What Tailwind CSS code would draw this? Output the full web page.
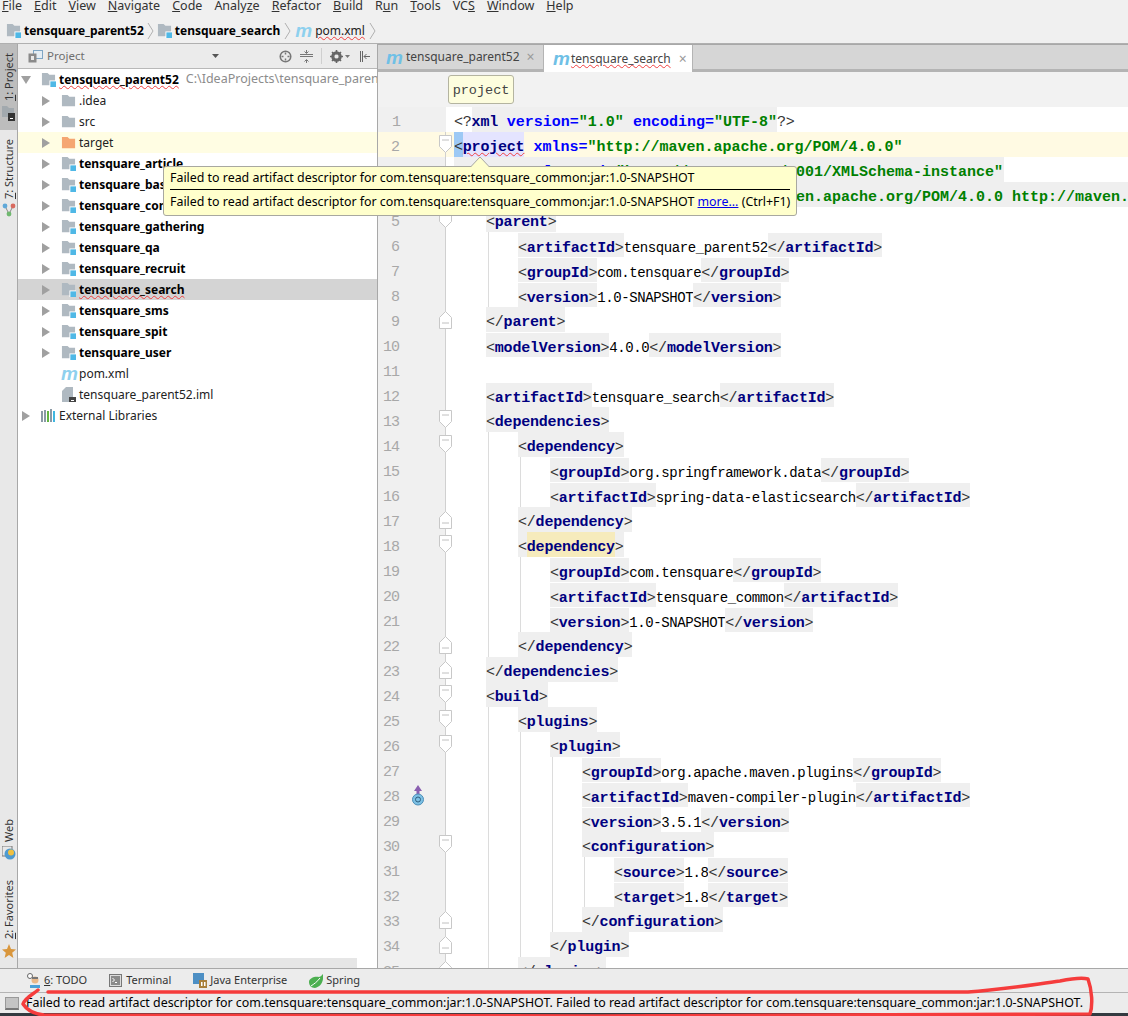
<!DOCTYPE html>
<html lang="en">
<head>
    <meta charset="UTF-8">
    <title>tensquare_parent52 - pom.xml</title>
    <script src="https://cdn.jsdelivr.net/npm/@tailwindcss/browser@4"></script>
</head>
<body class="bg-white">
    <svg class="hidden">
        <symbol id="folder" viewBox="0 0 16 16"><path d="M1 2h6l2 2h6v10H1z" fill="#afb9c1"/></symbol>
        <symbol id="module" viewBox="0 0 16 16"><path d="M1 1h6l2 2h6v11H1z" fill="#afb9c1"/><rect x="9" y="9" width="7" height="7" fill="#fff"/><rect x="10" y="10" width="6" height="6" fill="#4fb8e6"/></symbol>
        <symbol id="arrow" viewBox="0 0 8 10"><path d="M0 0l8 5-8 5z" fill="#a0a0a0"/></symbol>
        <symbol id="fold-down" viewBox="0 0 13 19"><path d="M.5.5h12v11l-6 6-6-6z" fill="#fff" stroke="#c8c8c8"/><path d="M3 5h7" stroke="#c0c0c0"/></symbol>
        <symbol id="fold-up" viewBox="0 0 13 19"><path d="M.5 18.5h12v-11l-6-6-6 6z" fill="#fff" stroke="#c8c8c8"/><path d="M3 13h7" stroke="#c0c0c0"/></symbol>
    </svg>

    <div class="relative w-[1128px] h-[1016px] overflow-hidden flex flex-col font-['Noto_Sans','Open_Sans',sans-serif] text-[12.4px] text-[#222]">
        <!-- Menu bar, cut off at the top of the shot -->
        <div class="h-[15px] shrink-0 bg-[#f0f0f0] flex items-end overflow-hidden pl-[2px] text-[12.5px] leading-[18px] text-[#333]">
            <div class="flex gap-[12px]">
                <span><u>F</u>ile</span><span><u>E</u>dit</span><span><u>V</u>iew</span><span><u>N</u>avigate</span><span><u>C</u>ode</span><span>Analy<u>z</u>e</span><span><u>R</u>efactor</span><span><u>B</u>uild</span><span>R<u>u</u>n</span><span><u>T</u>ools</span><span>VC<u>S</u></span><span><u>W</u>indow</span><span><u>H</u>elp</span>
            </div>
        </div>

        <!-- Breadcrumbs -->
        <div class="h-[29px] shrink-0 bg-[#f0f0f0] border-b border-[#b0b0b0] flex items-center pl-[6px] pt-[3px] text-[12px]">
            <svg class="w-[15px] h-[15px] mr-[3px]"><use href="#module"/></svg>
            <span class="font-bold text-black">tensquare_parent52</span>
            <svg class="w-[7px] h-[18px] mx-[3px]" viewBox="0 0 7 18" fill="none" stroke="#b0b0b0"><path d="M1 1l5 8-5 8"/></svg>
            <svg class="w-[15px] h-[15px] mr-[3px]"><use href="#module"/></svg>
            <span class="font-bold text-black">tensquare_search</span>
            <svg class="w-[7px] h-[18px] mx-[4px]" viewBox="0 0 7 18" fill="none" stroke="#b0b0b0"><path d="M1 1l5 8-5 8"/></svg>
            <span class="italic font-bold text-[19px] leading-none text-[#8ed0ee] mr-[3px] font-['Liberation_Sans']">m</span>
            <span class="underline decoration-wavy decoration-[#f04040] decoration-1">pom.xml</span>
            <svg class="w-[7px] h-[18px] ml-[4px]" viewBox="0 0 7 18" fill="none" stroke="#b0b0b0"><path d="M1 1l5 8-5 8"/></svg>
        </div>

        <div class="flex-1 flex min-h-0">
            <!-- Left tool strip -->
            <div class="w-[18px] shrink-0 bg-[#e8e8e8] border-r border-[#a8a8a8] flex flex-col items-center text-[11px] text-[#333]">
                <div class="w-full h-[86px] bg-[#bdbdbd] flex flex-col items-center pt-[9px]">
                    <span class="[writing-mode:vertical-rl] rotate-180 leading-[16px]"><u>1</u>: Project</span>
                    <svg class="w-[13px] h-[15px] mt-[5px]" viewBox="0 0 13 15"><path d="M0 0h5l2 2h5v9H0z" fill="#a2a9ae"/><rect x="6" y="7" width="7" height="8" fill="#333"/><rect x="8" y="12" width="3" height="1" fill="#fff"/></svg>
                </div>
                <span class="[writing-mode:vertical-rl] rotate-180 leading-[16px] mt-[9px]"><u>7</u>: Structure</span>
                <svg class="w-[14px] h-[14px] mt-[4px]" viewBox="0 0 14 14" fill="none"><path d="M3 3l4 8 4-8" stroke="#888"/><circle cx="3" cy="3" r="2.4" fill="#5fa8d8"/><circle cx="11" cy="3" r="2.4" fill="#d86a5f"/><circle cx="7" cy="11" r="2.4" fill="#6fb86f"/></svg>
                <span class="[writing-mode:vertical-rl] rotate-180 leading-[16px] mt-auto">Web</span>
                <svg class="w-[14px] h-[14px] mt-[4px]" viewBox="0 0 14 14"><rect x="0" y="0" width="10" height="10" fill="none" stroke="#777"/><circle cx="8" cy="8" r="5.5" fill="#4e9ad0"/><circle cx="9" cy="6.5" r="3" fill="#f0c040"/></svg>
                <span class="[writing-mode:vertical-rl] rotate-180 leading-[16px] mt-[20px]"><u>2</u>: Favorites</span>
                <svg class="w-[14px] h-[14px] mt-[5px] mb-[10px]" viewBox="0 0 14 14"><path d="M7 0l2 5 5 .4-3.8 3.3L11.4 14 7 11 2.6 14l1.2-5.3L0 5.4 5 5z" fill="#d9963c"/></svg>
            </div>

            <!-- Project panel -->
            <div class="w-[360px] shrink-0 border-r border-[#a8a8a8] flex flex-col">
                <div class="h-[25px] shrink-0 bg-[#ebebeb] border-b border-[#b8b8b8] flex items-center text-[11.5px] text-[#6e6e6e]">
                    <svg class="w-[15px] h-[13px] ml-[10px] mr-[4px]" viewBox="0 0 15 13" fill="none"><rect x="5.5" y=".5" width="9" height="8" stroke="#7fa6c4" fill="#e4edf4"/><rect x=".5" y="3.5" width="8" height="9" fill="#8a8a8a"/><rect x="3" y="6" width="3" height="4" fill="#e8e8e8"/></svg>
                    <span>Project</span>
                    <svg class="w-[7px] h-[4px] ml-[127px]" viewBox="0 0 7 4"><path d="M0 0h7L3.500 4z" fill="#555"/></svg>
                    <svg class="w-[13px] h-[13px] ml-[60px]" viewBox="0 0 13 13" fill="none"><circle cx="6.500" cy="6.500" r="5.300" stroke="#777" stroke-width="1.500"/><path d="M6.500 2.500v2M6.500 8.500v2M2.500 6.500h2M8.500 6.500h2" stroke="#777" stroke-width="1.500"/></svg>
                    <svg class="w-[13px] h-[13px] ml-[8px]" viewBox="0 0 13 13" fill="none" stroke="#777"><path d="M0 6.500h13M0 4.500h13M6.500 0v3M6.500 13v-3M4.500 1.500l2 2 2-2M4.500 11.500l2-2 2 2"/></svg>
                    <span class="w-px h-[16px] bg-[#cfcfcf] ml-[8px]"></span>
                    <svg class="w-[13px] h-[13px] ml-[8px]" viewBox="0 0 13 13"><circle cx="6.500" cy="6.500" r="4" fill="none" stroke="#666" stroke-width="2.500"/><path d="M6.500 0v13M0 6.500h13M2 2l9 9M11 2l-9 9" stroke="#666" stroke-width="1.600"/><circle cx="6.500" cy="6.500" r="2" fill="#ebebeb"/></svg>
                    <svg class="w-[5px] h-[3px] ml-[2px]" viewBox="0 0 5 3"><path d="M0 0h5L2.500 3z" fill="#777"/></svg>
                    <svg class="w-[12px] h-[13px] ml-[9px]" viewBox="0 0 12 13" fill="none" stroke="#666"><path d="M1.500 1v11M3.500 1v11" /><path d="M11 6.500H5M7.500 4l-2.500 2.500L7.500 9"/></svg>
                </div>
                <div class="flex-1 min-h-0 bg-white text-[12px] overflow-hidden">
                    <div class="h-[21px] flex items-center pl-[3px]">
                        <svg class="w-[10px] h-[8px] mr-[10px] shrink-0" viewBox="0 0 10 8"><path d="M0 0h10L5 8z" fill="#a0a0a0"/></svg>
                        <svg class="w-[15px] h-[15px] mr-[3px] shrink-0"><use href="#module"/></svg>
                        <span class="shrink-0 font-bold text-black underline decoration-wavy decoration-[#f04040] decoration-1">tensquare_parent52</span>
                        <span class="ml-[7px] text-[12.5px] text-[#8c8c8c] whitespace-nowrap overflow-hidden">C:\IdeaProjects\tensquare_paren</span>
                    </div>
                    <div class="h-[21px] flex items-center pl-[24px]"><svg class="w-[8px] h-[10px] mr-[11px]"><use href="#arrow"/></svg><svg class="w-[15px] h-[15px] mr-[3px]"><use href="#folder"/></svg><span>.idea</span></div>
                    <div class="h-[21px] flex items-center pl-[24px]"><svg class="w-[8px] h-[10px] mr-[11px]"><use href="#arrow"/></svg><svg class="w-[15px] h-[15px] mr-[3px]"><use href="#folder"/></svg><span>src</span></div>
                    <div class="h-[21px] flex items-center pl-[24px] bg-[#fffde3]"><svg class="w-[8px] h-[10px] mr-[11px]"><use href="#arrow"/></svg><svg class="w-[15px] h-[15px] mr-[3px]"><path d="M1 2h6l2 2h6v10H1z" fill="#f5a672" transform="scale(.94)"/></svg><span>target</span></div>
                    <div class="h-[21px] flex items-center pl-[24px]"><svg class="w-[8px] h-[10px] mr-[11px]"><use href="#arrow"/></svg><svg class="w-[15px] h-[15px] mr-[3px]"><use href="#module"/></svg><span class="font-bold text-black">tensquare_article</span></div>
                    <div class="h-[21px] flex items-center pl-[24px]"><svg class="w-[8px] h-[10px] mr-[11px]"><use href="#arrow"/></svg><svg class="w-[15px] h-[15px] mr-[3px]"><use href="#module"/></svg><span class="font-bold text-black">tensquare_base</span></div>
                    <div class="h-[21px] flex items-center pl-[24px]"><svg class="w-[8px] h-[10px] mr-[11px]"><use href="#arrow"/></svg><svg class="w-[15px] h-[15px] mr-[3px]"><use href="#module"/></svg><span class="font-bold text-black">tensquare_common</span></div>
                    <div class="h-[21px] flex items-center pl-[24px]"><svg class="w-[8px] h-[10px] mr-[11px]"><use href="#arrow"/></svg><svg class="w-[15px] h-[15px] mr-[3px]"><use href="#module"/></svg><span class="font-bold text-black">tensquare_gathering</span></div>
                    <div class="h-[21px] flex items-center pl-[24px]"><svg class="w-[8px] h-[10px] mr-[11px]"><use href="#arrow"/></svg><svg class="w-[15px] h-[15px] mr-[3px]"><use href="#module"/></svg><span class="font-bold text-black">tensquare_qa</span></div>
                    <div class="h-[21px] flex items-center pl-[24px]"><svg class="w-[8px] h-[10px] mr-[11px]"><use href="#arrow"/></svg><svg class="w-[15px] h-[15px] mr-[3px]"><use href="#module"/></svg><span class="font-bold text-black">tensquare_recruit</span></div>
                    <div class="h-[21px] flex items-center pl-[24px] bg-[#d4d4d4]"><svg class="w-[8px] h-[10px] mr-[11px]"><use href="#arrow"/></svg><svg class="w-[15px] h-[15px] mr-[3px]"><use href="#module"/></svg><span class="font-bold text-black underline decoration-wavy decoration-[#f04040] decoration-1">tensquare_search</span></div>
                    <div class="h-[21px] flex items-center pl-[24px]"><svg class="w-[8px] h-[10px] mr-[11px]"><use href="#arrow"/></svg><svg class="w-[15px] h-[15px] mr-[3px]"><use href="#module"/></svg><span class="font-bold text-black">tensquare_sms</span></div>
                    <div class="h-[21px] flex items-center pl-[24px]"><svg class="w-[8px] h-[10px] mr-[11px]"><use href="#arrow"/></svg><svg class="w-[15px] h-[15px] mr-[3px]"><use href="#module"/></svg><span class="font-bold text-black">tensquare_spit</span></div>
                    <div class="h-[21px] flex items-center pl-[24px]"><svg class="w-[8px] h-[10px] mr-[11px]"><use href="#arrow"/></svg><svg class="w-[15px] h-[15px] mr-[3px]"><use href="#module"/></svg><span class="font-bold text-black">tensquare_user</span></div>
                    <div class="h-[21px] flex items-center pl-[43px]"><span class="italic font-bold text-[19px] leading-none text-[#8ed0ee] w-[18px] font-['Liberation_Sans']">m</span><span>pom.xml</span></div>
                    <div class="h-[21px] flex items-center pl-[44px]"><svg class="w-[14px] h-[15px] mr-[3px]" viewBox="0 0 14 15"><path d="M4 0h7v15H0V4z" fill="#afb9c1"/><rect x="7" y="10" width="7" height="5" fill="#444"/><rect x="9" y="13" width="3" height="1" fill="#fff"/></svg><span>tensquare_parent52.iml</span></div>
                    <div class="h-[21px] flex items-center pl-[4px]">
                        <svg class="w-[8px] h-[10px] mr-[11px]"><use href="#arrow"/></svg>
                        <svg class="w-[15px] h-[13px] mr-[3px]" viewBox="0 0 15 13"><rect x="0" y="2" width="2" height="11" fill="#8a9aa6"/><rect x="3" y="1" width="2" height="12" fill="#8a9aa6"/><rect x="6" y="2" width="2" height="11" fill="#62b543"/><rect x="9" y="0" width="2" height="13" fill="#8a9aa6"/><rect x="12" y="2" width="2" height="11" fill="#40b6e0"/></svg>
                        <span>External Libraries</span>
                    </div>
                </div>
                <div class="h-[10px] shrink-0 w-[339px] bg-[#e6e6e6]"></div>
            </div>

            <!-- Editor -->
            <div class="flex-1 min-w-0 flex flex-col bg-white">
                <div class="h-[28px] shrink-0 bg-[#d6d6d6] border-t border-b-[3px] border-t-[#a8a8a8] border-b-[#b4b4b4] flex text-[#444] text-[12px]">
                    <div class="w-[165px] flex items-center pl-[8px]">
                        <span class="italic font-bold text-[19px] leading-none text-[#6fc0e6] mr-[3px] font-['Liberation_Sans']">m</span>
                        <span>tensquare_parent52</span>
                        <span class="ml-[7px] text-[#9a9a9a] text-[14px] leading-none">×</span>
                    </div>
                    <div class="w-[150px] bg-white flex items-center pl-[9px] border-x border-[#b4b4b4] -mb-[3px]">
                        <span class="italic font-bold text-[19px] leading-none text-[#6fc0e6] mr-[1px] font-['Liberation_Sans']">m</span>
                        <span class="underline decoration-wavy decoration-[#f04040] decoration-1">tensquare_search</span>
                        <span class="ml-[8px] text-[#9a9a9a] text-[14px] leading-none">×</span>
                    </div>
                </div>
                <div class="h-[35px] shrink-0 bg-[#f2f2f2] pt-[3px] pl-[70px]">
                    <div class="w-[66px] h-[29px] bg-[#fdfdde] border border-[#b4b4a0] rounded-[3px] flex items-center justify-center pt-[3px] font-['Liberation_Mono'] text-[13.5px] text-[#444]">project</div>
                </div>
                <div id="code" class="flex-1 min-h-0 overflow-hidden"></div>
            </div>
        </div>

        <!-- Bottom tool bar -->
        <div class="h-[24px] shrink-0 bg-[#ececec] border-t border-[#a8a8a8] flex items-center text-[11px] text-[#333]">
            <svg class="w-[14px] h-[15px] ml-[27px] mr-[3px]" viewBox="0 0 14 15"><circle cx="3" cy="3" r="2.500" fill="#fff" stroke="#666"/><circle cx="8" cy="7" r="3.500" fill="#e8b88a"/><path d="M5 4h6v2H5z" fill="#777"/><path d="M3 15v-3h10v3z" fill="#4aa0d8"/></svg>
            <span><u>6</u>: TODO</span>
            <svg class="w-[13px] h-[13px] ml-[22px] mr-[4px]" viewBox="0 0 13 13"><rect x=".5" y=".5" width="12" height="12" fill="#dcdcdc" stroke="#777"/><rect x="2" y="2" width="9" height="9" fill="#8a8a8a"/><path d="M3.500 4l2 2-2 2M6 8.500h2" stroke="#fff" fill="none"/></svg>
            <span>Terminal</span>
            <svg class="w-[14px] h-[15px] ml-[22px] mr-[3px]" viewBox="0 0 14 15"><rect width="11" height="11" fill="#4d8fc4"/><rect x="6" y="7" width="8" height="8" fill="#a9803c"/><path d="M8 9h1.500v4H8zM11 9h1.500v4H11z" fill="#fff"/></svg>
            <span>Java Enterprise</span>
            <svg class="w-[14px] h-[14px] ml-[22px] mr-[3px]" viewBox="0 0 14 14"><path d="M14 0c1 7-2 13-8 14C2 14 0 11 0 8c0-4 6-6 10-5 2-.5 3-2 4-3z" fill="#4caf50"/><path d="M2 12C5 10 8 8 11 4" stroke="#fff" fill="none"/></svg>
            <span>Spring</span>
        </div>

        <!-- Status bar -->
        <div class="h-[21px] shrink-0 bg-[#ececec] border-t border-[#b4b4b4] flex items-center text-black">
            <span class="w-[14px] h-[13px] ml-[5px] mr-[7px] bg-[#c4c4c4] border border-[#999] border-b-2 border-b-[#777]"></span>
            <span class="whitespace-nowrap">Failed to read artifact descriptor for com.tensquare:tensquare_common:jar:1.0-SNAPSHOT. Failed to read artifact descriptor for com.tensquare:tensquare_common:jar:1.0-SNAPSHOT.</span>
        </div>
        <div class="h-[3px] shrink-0 bg-[#333a40]"></div>

        <!-- Error popup over the tree and the editor -->
        <div class="absolute left-[163px] top-[166px] w-[634px] h-[50px] bg-[#ffffcc] border border-[#a8a8a0] rounded-[3px] text-black px-[6px] flex flex-col">
            <div class="h-[22px] flex items-center whitespace-nowrap">Failed to read artifact descriptor for com.tensquare:tensquare_common:jar:1.0-SNAPSHOT</div>
            <div class="h-px bg-black"></div>
            <div class="flex-1 flex items-center whitespace-nowrap">Failed to read artifact descriptor for com.tensquare:tensquare_common:jar:1.0-SNAPSHOT&nbsp;<a class="text-[#0000ee] underline">more...</a>&nbsp;(Ctrl+F1)</div>
        </div>
        <svg class="absolute left-[471px] top-[157px] w-[18px] h-[10px]" viewBox="0 0 18 10"><path d="M0 10L9 0l9 10z" fill="#ffffcc"/><path d="M0 9.500L9 0l9 9.500" fill="none" stroke="#a8a8a0"/></svg>

        <!-- Hand drawn red circle round the status message -->
        <svg class="absolute left-0 top-[970px] w-[1128px] h-[46px]" viewBox="0 970 1128 46" fill="none" stroke="#f53c3c" stroke-width="3.500" stroke-linecap="round" stroke-linejoin="round">
            <path d="M38 990C32 995 25 998 23 1004C27 1010 34 1014 44 1015C300 1017 800 1016 1090 1014C1093 1005 1092 990 1088 979C1080 977 1070 979 1060 981C1030 985 1000 990 968 992C700 992 300 992 48 992"/>
        </svg>
    </div>

    <script>
        // line-by-line pom.xml; brackets are thin, names bold on a grey block
        const bracket = s => `<span class="font-normal text-[#333] tracking-[-0.2px]">${s}</span>`;
        const name = s => `<span class="font-bold text-[#000080] tracking-[-0.2px]">${s}</span>`;
        const open = s => `<span class="inline-block h-[25px] bg-[#efefef]">${bracket('&lt;')}${name(s)}${bracket('&gt;')}</span>`;
        const close = s => `<span class="inline-block h-[25px] bg-[#efefef]">${bracket('&lt;/')}${name(s)}${bracket('&gt;')}</span>`;
        const text = s => `<span class="text-black text-[14px] tracking-[-0.4px]">${s}</span>`;
        const leaf = (t, v) => open(t) + text(v) + close(t);
        const attr = s => `<span class="font-bold text-[#0000ff]">${s}</span>`;
        const str = s => `<span class="font-bold text-[#008000]">${s}</span>`;

        const lines = [
            [0, bracket('&lt;?') + `<span class="inline-block h-[25px] bg-[#efefef]"><span class="font-bold text-[#000080] tracking-[-0.2px]">xml </span>${attr('version=')}${str('"1.0"')} ${attr('encoding=')}${str('"UTF-8"')}</span>` + bracket('?&gt;')],
            [0, `<span class="inline-block h-[25px] bg-[#9dc9f5] text-[#333] tracking-[-0.2px]">&lt;</span><span class="inline-block h-[25px] bg-[#e4e4ff] font-bold text-[#000080] tracking-[-0.2px]"><span class="underline decoration-wavy decoration-[#f04040] decoration-1">project</span></span> ${attr('xmlns=')}${str('"http://maven.apache.org/POM/4.0.0"')}`],
            [0, `<span class="inline-block w-[72px]"></span>${attr('xmlns:xsi=')}${str('"http://www.w3.org/2001/XMLSchema-instance"')}`],
            [0, `<span class="inline-block w-[72px]"></span>${attr('xsi:schemaLocation=')}${str('"http://maven.apache.org/POM/4.0.0 http://maven.apache.org/xsd/maven-4.0.0.xsd"')}`],
            [1, open('parent')],
            [2, open('artifactId') + text('tensquare_parent52') + close('artifactId')],
            [2, open('groupId') + text('com.tensquare') + close('groupId')],
            [2, open('version') + text('1.0-SNAPSHOT') + close('version')],
            [1, close('parent')],
            [1, open('modelVersion') + text('4.0.0') + close('modelVersion')],
            [0, ''],
            [1, open('artifactId') + text('tensquare_search') + close('artifactId')],
            [1, open('dependencies')],
            [2, open('dependency')],
            [3, leaf('groupId', 'org.springframework.data')],
            [3, leaf('artifactId', 'spring-data-elasticsearch')],
            [2, close('dependency')],
            [2, `<span class="inline-block h-[25px] bg-[#efefef]">${bracket('&lt;')}<span class="inline-block h-[25px] bg-[#f6ebbc] font-bold text-[#000080] tracking-[-0.2px]">dependency</span>${bracket('&gt;')}</span>`],
            [3, leaf('groupId', 'com.tensquare')],
            [3, leaf('artifactId', 'tensquare_common')],
            [3, leaf('version', '1.0-SNAPSHOT')],
            [2, close('dependency')],
            [1, close('dependencies')],
            [1, open('build')],
            [2, open('plugins')],
            [3, open('plugin')],
            [4, leaf('groupId', 'org.apache.maven.plugins')],
            [4, leaf('artifactId', 'maven-compiler-plugin')],
            [4, leaf('version', '3.5.1')],
            [4, open('configuration')],
            [5, leaf('source', '1.8')],
            [5, leaf('target', '1.8')],
            [4, close('configuration')],
            [3, close('plugin')],
            [2, close('plugins')],
        ];
        const foldDown = [2, 5, 13, 14, 18, 24, 25, 26, 30];
        const foldUp = [9, 17, 22, 23, 33, 34, 35];
        const guide = '<span class="w-8 shrink-0 pl-[2px]"><span class="block h-full w-px bg-[#dcdcdc]"></span></span>';
        const blank = '<span class="w-8 shrink-0"></span>';

        document.getElementById('code').innerHTML = lines.map(([level, html], i) => {
            const n = i + 1;
            const yellow = n === 2;
            const fold = foldDown.includes(n) ? 'fold-down' : foldUp.includes(n) ? 'fold-up' : '';
            const marker = fold ? `<svg class="absolute right-[-7px] top-[3px] w-[13px] h-[19px]"><use href="#${fold}"/></svg>` : '';
            const icon = n === 28 ? `<svg class="absolute left-[33px] top-[3px] w-[14px] h-[21px]" viewBox="0 0 14 21"><path d="M7 0l4 6H8.500v4h-3V6H3z" fill="#8a5fb0"/><circle cx="7" cy="14.500" r="5.500" fill="#7cc0e4" stroke="#4d8fb8"/><circle cx="7" cy="14.500" r="2.500" fill="none" stroke="#2e5f80"/></svg>` : '';
            const guides = level ? blank + guide.repeat(level - 1) : '';
            const grey = n === 3 ? 'bg-[#efefef] w-[550px]' : n === 4 ? 'bg-[#efefef] flex-1' : 'flex-1';
            return `<div class="h-[25px] flex ${yellow ? 'bg-[#fffae3]' : ''}">
                <div class="relative w-[68px] shrink-0 ${yellow ? '' : 'bg-[#f0f0f0]'} ${n === 1 ? '' : 'border-r border-[#d0d0d0]'}">
                    <span class="absolute right-[46px] top-0 leading-[32px] font-['Liberation_Mono'] text-[15px] tracking-[-1px] text-[#a8a8a8]">${n}</span>
                    ${icon}${marker}
                </div>
                <div class="${grey} min-w-0 ml-[8px] flex items-stretch overflow-hidden whitespace-pre font-['Liberation_Mono'] text-[15px] leading-[32px]">
                    ${guides}<span class="whitespace-pre">${html}</span>
                </div>
            </div>`;
        }).join('');
    </script>
</body>
</html>
